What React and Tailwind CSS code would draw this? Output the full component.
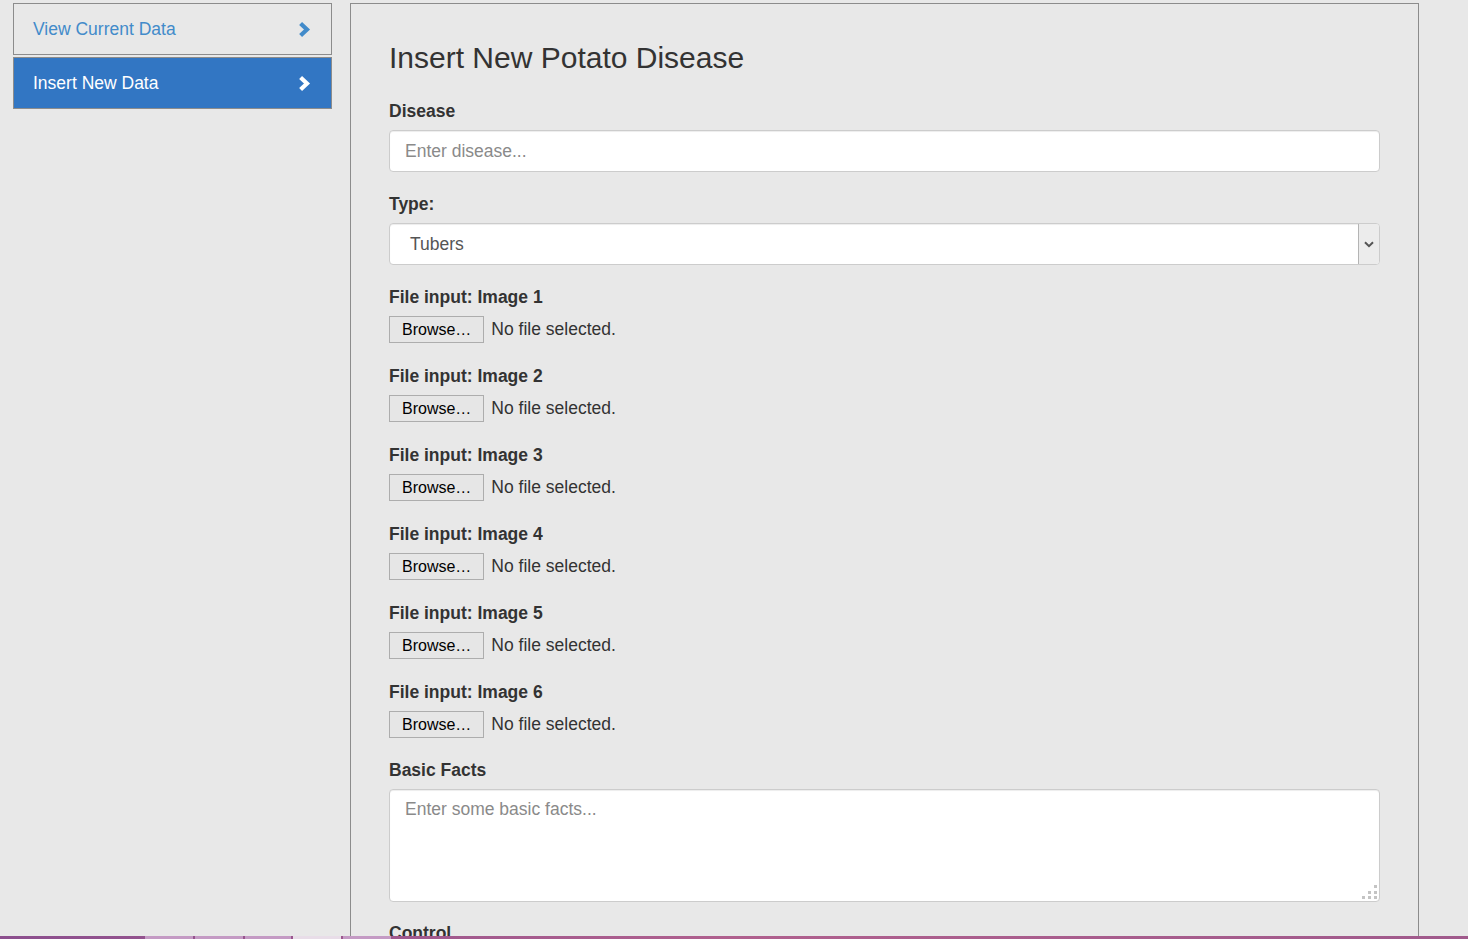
import React from 'react';

const Chevron = ({ className }) => (
  <svg viewBox="0 0 13 17" className={className} fill="none">
    <path d="M2.6 2.4 L9 8.5 L2.6 14.6" stroke="currentColor" strokeWidth="4.2" strokeLinejoin="miter" />
  </svg>
);

const FileField = ({ n }) => (
  <div className="mt-[20px]">
    <label className="block font-bold leading-[25px] text-[#333]">File input: Image {n}</label>
    <div className="mt-[6px] flex h-[28px] items-start gap-[7px]">
      <button className="h-[27px] border border-[#adadad] bg-[#e6e6e6] px-[12px] text-[16px] leading-[25px] text-black">
        Browse…
      </button>
      <span className="leading-[27px] text-[#333]">No file selected.</span>
    </div>
  </div>
);

const App = () => {
  return (
    <div className="min-h-screen bg-[#e8e8e8] font-['Liberation_Sans',Arial,sans-serif] text-[17.5px]">
      <div className="flex items-start gap-[18px] pl-[13px] pt-[3px]">
        <nav className="flex w-[319px] flex-col gap-[2px]">
          <a className="flex h-[52px] items-center justify-between border border-[#8c8c8c] pl-[19px] pr-[20px] text-[#428bca]">
            <span>View Current Data</span>
            <Chevron className="h-[17px] w-[13px] text-[#428bca]" />
          </a>
          <a className="flex h-[52px] items-center justify-between border border-[#8c8c8c] bg-[#3276c3] pl-[19px] pr-[20px] text-white">
            <span>Insert New Data</span>
            <Chevron className="h-[17px] w-[13px] text-white" />
          </a>
        </nav>

        <main className="w-[1069px] border border-[#8c8c8c] px-[38px] pb-[40px] pt-[37px]">
          <h2 className="text-[30px] leading-[33px] text-[#333]">Insert New Potato Disease</h2>

          <div className="mt-[25px]">
            <label className="block font-bold leading-[25px] text-[#333]">Disease</label>
            <input
              type="text"
              placeholder="Enter disease..."
              className="mt-[6px] h-[42px] w-full rounded-[4px] border border-[#ccc] bg-white px-[15px] text-[#555] shadow-[inset_0_1px_1px_rgba(0,0,0,0.075)] outline-none placeholder:text-[#8a8a8a]"
            />
          </div>

          <div className="mt-[20px]">
            <label className="block font-bold leading-[25px] text-[#333]">Type:</label>
            <div className="mt-[6px] flex h-[42px] w-full overflow-hidden rounded-[4px] border border-[#ccc] bg-white shadow-[inset_0_1px_1px_rgba(0,0,0,0.075)]">
              <div className="flex flex-1 items-center pl-[20px] text-[#555]">Tubers</div>
              <div className="flex w-[21px] items-center justify-center border-l border-[#b4b4b4] bg-[#ececec]">
                <svg viewBox="0 0 10 7" className="h-[7px] w-[10px]" fill="none">
                  <path d="M1 1.2 L5 5.2 L9 1.2" stroke="#555" strokeWidth="2" />
                </svg>
              </div>
            </div>
          </div>

          {[1, 2, 3, 4, 5, 6].map((n) => (
            <FileField key={n} n={n} />
          ))}

          <div className="mt-[19px]">
            <label className="block font-bold leading-[25px] text-[#333]">Basic Facts</label>
            <div className="relative mt-[6px]">
              <textarea
                placeholder="Enter some basic facts..."
                className="block h-[113px] w-full resize-none rounded-[4px] border border-[#ccc] bg-white px-[15px] py-[7px] leading-[25px] text-[#555] shadow-[inset_0_1px_1px_rgba(0,0,0,0.075)] outline-none placeholder:text-[#8a8a8a]"
              />
              <svg viewBox="0 0 16 16" className="absolute bottom-[2px] right-[2px] h-[16px] w-[16px]">
                <rect x="12" y="1" width="3" height="3" fill="#c4c4c4" />
                <rect x="6" y="7" width="3" height="3" fill="#c4c4c4" />
                <rect x="12" y="7" width="3" height="3" fill="#c4c4c4" />
                <rect x="0" y="12" width="3" height="3" fill="#c4c4c4" />
                <rect x="6" y="12" width="3" height="3" fill="#c4c4c4" />
                <rect x="12" y="12" width="3" height="3" fill="#c4c4c4" />
              </svg>
            </div>
          </div>

          <div className="mt-[19px]">
            <label className="block font-bold leading-[25px] text-[#333]">Control</label>
            <textarea className="mt-[6px] block h-[113px] w-full resize-none rounded-[4px] border border-[#ccc] bg-white" />
          </div>
        </main>
      </div>

      <div className="fixed bottom-0 left-0 flex h-[3px] w-full bg-gradient-to-r from-[#8c4f8e] via-[#b0608e] to-[#a05a8c]">
        <div className="ml-[145px] flex gap-[2px]">
          <div className="h-[3px] w-[48px] bg-[#c49ac4]" />
          <div className="h-[3px] w-[48px] bg-[#c49ac4]" />
          <div className="h-[3px] w-[46px] bg-[#c49ac4]" />
          <div className="h-[3px] w-[48px] bg-[#e8dde8]" />
          <div className="h-[3px] w-[48px] bg-[#c49ac4]" />
        </div>
      </div>
    </div>
  );
};

export default App;
